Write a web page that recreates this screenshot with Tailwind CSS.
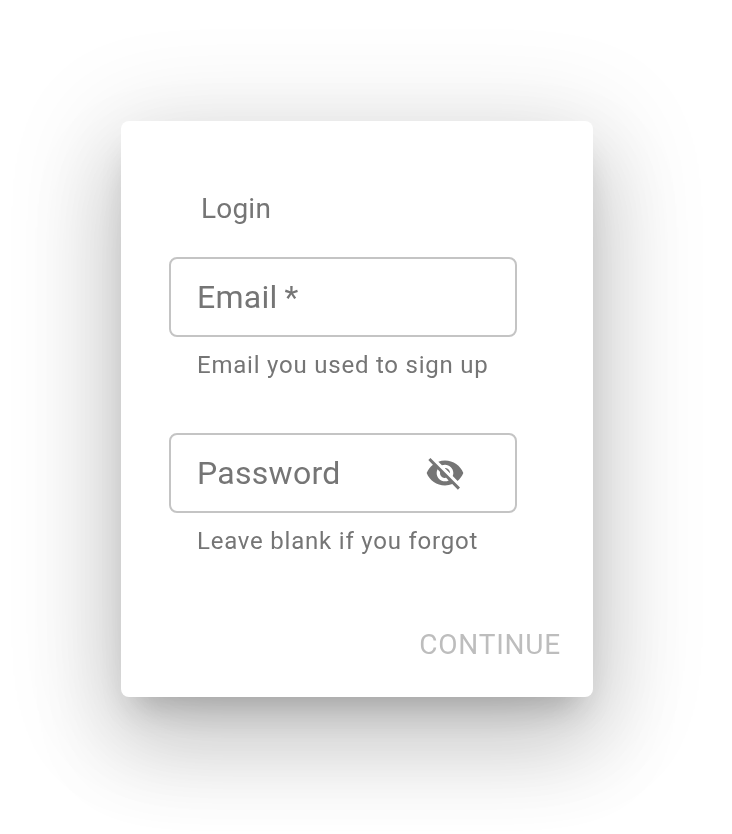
<!DOCTYPE html>
<html lang="en">
<head>
<meta charset="utf-8">
<title>Login</title>
<script src="https://cdn.jsdelivr.net/npm/@tailwindcss/browser@4"></script>
</head>
<body class="h-[834px] overflow-hidden bg-white pt-[121px] pl-[121px] font-[Roboto,sans-serif] text-[#757575]">
<main class="h-[576px] w-[472px] rounded-lg bg-white shadow-[0_22px_32px_-14px_rgba(0,0,0,0.2),0_48px_88px_6px_rgba(0,0,0,0.14),0_18px_106px_16px_rgba(0,0,0,0.12)]">
<div class="flex h-full flex-col px-12 pt-[68px] will-change-transform">
<h1 class="h-[68px] pl-8 text-[28px] leading-10 tracking-[0.2px]">Login</h1>
<div class="flex h-20 w-[348px] items-center rounded-lg border-2 border-[#c4c4c4] px-[26px] text-[32px] tracking-[0.28px] [word-spacing:-1.3px]">Email&nbsp;*</div>
<p class="h-24 pt-2 pl-7 text-2xl leading-10 tracking-[0.78px]">Email you used to sign up</p>
<div class="flex h-20 w-[348px] items-center justify-between rounded-lg border-2 border-[#c4c4c4] pr-[50px] pl-[26px] text-[32px] tracking-[0.28px]">
<span>Password</span>
<svg class="size-10" viewBox="0 0 24 24" fill="currentColor"><path d="M12 7c2.76 0 5 2.24 5 5 0 .65-.13 1.26-.36 1.83l2.92 2.92c1.51-1.26 2.7-2.89 3.43-4.75-1.73-4.39-6-7.5-11-7.5-1.4 0-2.74.25-3.98.7l2.16 2.16C10.74 7.13 11.35 7 12 7zM2 4.27l2.28 2.28.46.46C3.08 8.3 1.78 10.02 1 12c1.73 4.39 6 7.5 11 7.5 1.55 0 3.03-.3 4.38-.84l.42.42L19.73 22 21 20.73 3.27 3 2 4.27zM7.53 9.8l1.55 1.55c-.05.21-.08.43-.08.65 0 1.66 1.34 3 3 3 .22 0 .44-.03.65-.08l1.55 1.55c-.67.33-1.41.53-2.2.53-2.76 0-5-2.24-5-5 0-.79.2-1.53.53-2.2zm4.31-.78l3.15 3.15.02-.16c0-1.66-1.34-3-3-3l-.17.01z"/></svg>
</div>
<p class="h-24 pt-2 pl-7 text-2xl leading-10 tracking-[0.78px]">Leave blank if you forgot</p>
<button class="-mr-4 self-end pt-4 text-[28px] leading-10 tracking-[0.78px] text-[#bdbdbd]">CONTINUE</button>
</div>
</main>
</body>
</html>
